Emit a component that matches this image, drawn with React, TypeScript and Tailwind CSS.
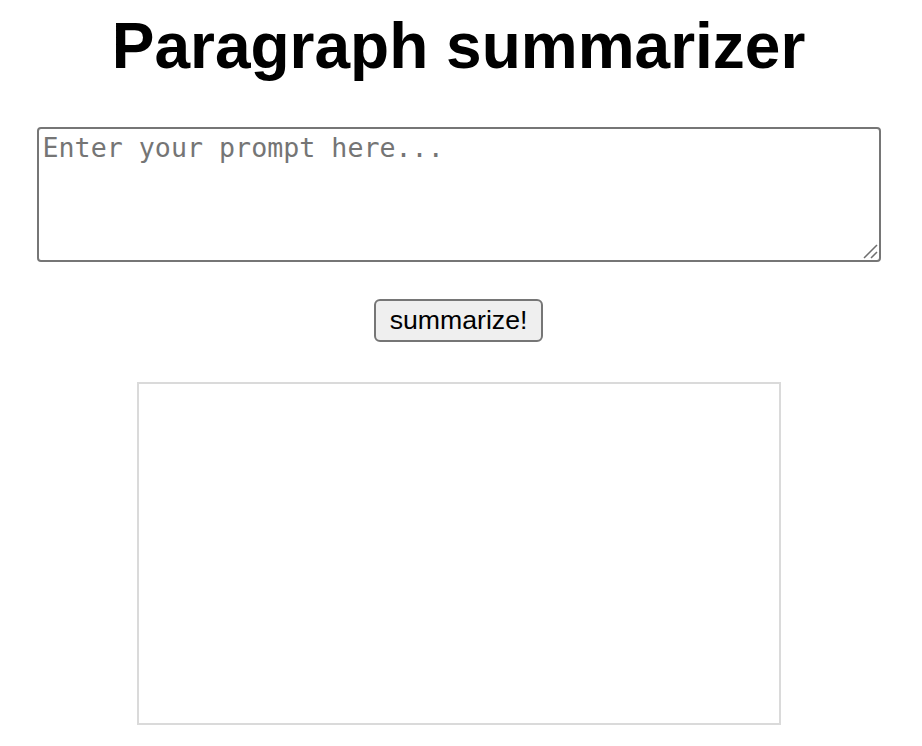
export default function App() {
  return (
    <div className="w-[917px] flex flex-col items-center bg-white min-h-[746px] font-['Liberation_Sans',Arial,sans-serif]">
      {/* Title */}
      <h1 className="mt-[9px] text-[64px] font-bold leading-[74px] text-black">
        Paragraph summarizer
      </h1>

      {/* Prompt input */}
      <div className="relative mt-[44px] w-[844px] h-[135px]">
        <textarea
          className="block w-full h-full border-2 border-[#767676] rounded-[4px] px-[4px] pt-[3px] pb-[4px] font-['DejaVu_Sans_Mono',monospace] text-[26.67px] leading-[31px] text-black placeholder:text-[#757575] resize-none outline-none"
          placeholder="Enter your prompt here..."
        />
        {/* resize grip */}
        <svg className="absolute right-[3px] bottom-[3px] pointer-events-none" width="16" height="16" viewBox="0 0 16 16">
          <path d="M2 15 L15 2 M9 15 L15 9" stroke="#6f6f6f" strokeWidth="1.5" />
        </svg>
      </div>

      {/* Submit */}
      <button className="mt-[37px] w-[169px] h-[43px] bg-[#efefef] border-2 border-[#767676] rounded-[6px] text-[26.67px] leading-none text-black font-['Liberation_Sans',Arial,sans-serif]">
        summarize!
      </button>

      {/* Output */}
      <div className="mt-[40px] w-[644px] h-[343px] border-2 border-[#dadada]"></div>
    </div>
  );
}
